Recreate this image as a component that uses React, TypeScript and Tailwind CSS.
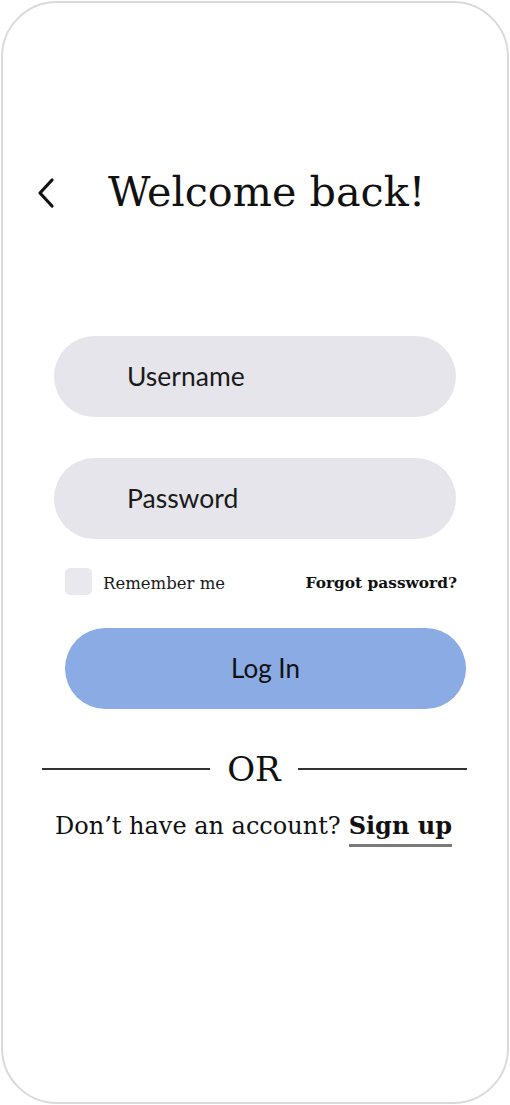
import React from "react";

const serif = { fontFamily: '"DejaVu Serif", "Liberation Serif", serif' };

export default function App() {
  return (
    <div className="w-[510px] h-[1105px] bg-white p-px">
      <div className="h-full w-full rounded-[56px] border-2 border-[#dadada] flex flex-col">
        <div className="mt-[160px] flex items-center h-[60px]">
          <svg className="ml-[33px]" width="22" height="34" viewBox="0 0 22 34" fill="none">
            <path d="M16 4 L4 17 L16 30" stroke="#111" strokeWidth="3.2" strokeLinecap="round" strokeLinejoin="round" />
          </svg>
          <h1 className="ml-[50px] text-[41.3px] leading-none text-[#111]" style={serif}>
            Welcome back!
          </h1>
        </div>

        <div className="mt-[113px] ml-[51px] w-[402px] h-[81px] rounded-full bg-[#e5e5eb] flex items-center pl-[73px] text-[26.5px] text-[#1a1a1a] font-['Lato',sans-serif]">
          Username
        </div>
        <div className="mt-[41px] ml-[51px] w-[402px] h-[81px] rounded-full bg-[#e5e5eb] flex items-center pl-[73px] text-[26.5px] text-[#1a1a1a] font-['Lato',sans-serif]">
          Password
        </div>

        <div className="mt-[29px] ml-[62px] w-[392px] h-[27px] flex items-center justify-between">
          <div className="flex items-center gap-[11px]">
            <div className="w-[27px] h-[27px] rounded-[5px] bg-[#e8e8ee]" />
            <span className="text-[16.5px] leading-none pt-[5px] text-[#1a1a1a]" style={serif}>Remember me</span>
          </div>
          <span className="text-[15.4px] leading-none pt-[5px] font-semibold text-[#111]" style={serif}>Forgot password?</span>
        </div>

        <button className="mt-[33px] ml-[62px] w-[401px] h-[81px] rounded-full bg-[#8aabe3] flex items-center justify-center text-[26px] text-[#111] font-['Lato',sans-serif]">
          Log In
        </button>

        <div className="mt-[40px] ml-[39px] w-[425px] h-[40px] flex items-center">
          <div className="w-[168px] h-[1.5px] bg-[#333]" />
          <span className="mx-auto text-[34px] leading-none text-[#111]" style={serif}>OR</span>
          <div className="w-[169px] h-[1.5px] bg-[#333]" />
        </div>

        <div className="mt-[22px] ml-[52px] flex items-baseline text-[24px] leading-[30px] text-[#111]" style={serif}>
          <span>Don’t have an account?</span>
          <span className="ml-[8px] font-bold border-b-[3px] border-[#7a7a7a] pb-[3px]">Sign up</span>
        </div>
      </div>
    </div>
  );
}
